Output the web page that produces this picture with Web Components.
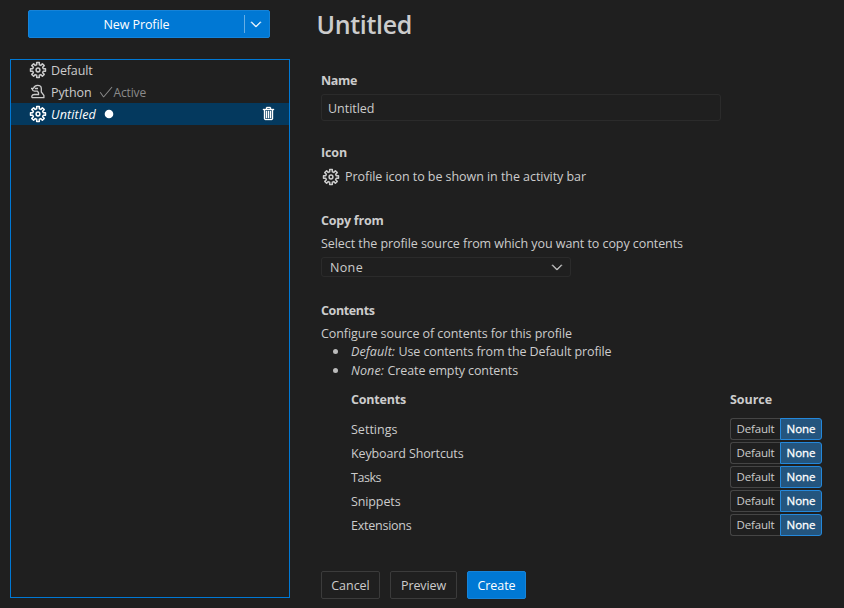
<!DOCTYPE html>
<html lang="en"><head><meta charset="utf-8"><title>Profiles</title>
<style>
html,body{margin:0;height:100%;background:#1f1f1f;overflow:hidden}
body{font:12.5px/18px "Open Sans","Noto Sans",sans-serif;color:#ccc}
</style></head><body><profiles-editor></profiles-editor>
<script>
const define=(name,html,init)=>customElements.define(name,class extends HTMLElement{
  constructor(){super();this.attachShadow({mode:'open'}).innerHTML=html}
  connectedCallback(){init&&init(this,this.shadowRoot)}
});

/* Text run tracked to a given width. */
define('ui-text','<style>:host{display:inline-block;white-space:pre}span{display:inline-block}</style><span><slot></slot></span>',(el,r)=>{
  const w=+el.getAttribute('w'),s=r.querySelector('span');
  if(!w)return;
  const n=el.textContent.length;
  s.style.letterSpacing=(w-s.getBoundingClientRect().width)/n+'px';
});

/* Eight-toothed gear outline. */
const gearPath=(()=>{
  const pts=[];
  for(let i=0;i<8;i++){
    for(const [d,r] of [[-14,5.4],[-10,7.6],[10,7.6],[14,5.4]]){
      const a=(i*45+d)*Math.PI/180;
      pts.push((8+r*Math.sin(a)).toFixed(2)+' '+(8-r*Math.cos(a)).toFixed(2));
    }
  }
  return 'M'+pts.join('L')+'Z';
})();

const icons={
gear:`<g fill="none" stroke="currentColor" stroke-width="1.500" stroke-linejoin="round"><path d="${gearPath}"/><circle cx="8" cy="8" r="1.900"/></g>`,
snake:'<path fill="none" stroke="currentColor" stroke-width="1.300" stroke-linejoin="round" d="M1 4.500H3.500M5 4.500H8M3.500 4.500Q4.200 1.400 7.600 1.400Q11.300 1.400 11.300 4.500V8L13.900 11.300V13.700H3Q1.500 13.700 1.900 12Q2.300 10.500 4.200 10.500H8.600Q9 8.600 7.500 7.200H4.500Q2.500 7 2.200 5"/>',
chevron:'<path d="M7.976 10.072l4.357-4.357.62.618L8.284 11h-.618L3 6.333l.619-.618 4.357 4.357z" stroke="currentColor" stroke-width=".5"/>',
check:'<path d="M14.431 3.323l-8.470 10-.790-.036-3.350-4.770.818-.574 2.978 4.240 8.051-9.506.764.646z"/>',
dot:'<circle cx="8" cy="8" r="4.300"/>',
trash:'<path stroke="currentColor" stroke-width=".35" d="M10 3h3v1h-1v9l-1 1H4l-1-1V4H2V3h3V2a1 1 0 0 1 1-1h3a1 1 0 0 1 1 1v1zM9 2H6v1h3V2zM4 13h7V4H4v9zm2-8H5v7h1V5zm1 0h1v7H7V5zm2 0h1v7H9V5z"/>'};
define('ui-icon','<style>:host{display:block;width:16px;height:16px;flex:none}svg{display:block;width:100%;height:100%;fill:currentColor;overflow:visible}</style><svg viewBox="0 0 16 16"></svg>',(el,r)=>{
  r.querySelector('svg').innerHTML=icons[el.getAttribute('name')];
});

define('split-button',`<style>:host{display:flex;height:28px;box-sizing:border-box;background:#0078d4;border:1px solid #1683d8;border-radius:2px;color:#fff;align-items:center}
.m{flex:1;text-align:center;padding-top:1px}.s{width:1px;height:18px;background:#66aee5}ui-icon{margin:0 5px 0 3px}</style>
<div class="m"><slot></slot></div><div class="s"></div><ui-icon name="chevron"></ui-icon>`);

define('profile-row',`<style>:host{display:flex;align-items:center;height:22px;padding:0 12px 0 19px}
:host([selected]){background:#04395e;color:#fff}
:host([selected]) .l{font-style:italic}.l{margin-left:5px;padding-top:1px;line-height:22px}.e{display:flex;align-items:center;flex:1}</style>
<ui-icon></ui-icon><div class="l"><slot></slot></div><div class="e"><slot name="extra"></slot></div><slot name="action"></slot>`,(el,r)=>{
  const i=r.querySelector('ui-icon');i.setAttribute('name',el.getAttribute('icon'));i.connectedCallback();
});

define('ui-button',`<style>:host{display:flex;box-sizing:border-box;height:28px;padding-top:2px;border:1px solid #3b3b3b;border-radius:2px;align-items:center;justify-content:center}
:host([primary]){background:#0078d4;border-color:#1683d8;color:#fff}</style><slot></slot>`);

define('source-toggle',`<style>:host{display:flex;height:22px;font-size:11.5px;line-height:20px}
div{box-sizing:border-box;border:1px solid #454545;text-align:center}
.a{width:50px;border-right:0;border-radius:3px 0 0 3px}.b{width:42px;border-color:#2488db;background:#24557e;color:#fff;border-radius:0 3px 3px 0;-webkit-text-stroke:.3px}</style>
<div class="a"><ui-text w="38">Default</ui-text></div><div class="b"><ui-text w="29">None</ui-text></div>`);

define('content-row',`<style>:host{display:flex;height:24px;align-items:center;justify-content:space-between}div{padding-top:2px}</style><div><slot></slot></div><source-toggle></source-toggle>`);

define('profiles-editor',`<style>
:host{display:flex;height:608px}
aside{width:280px;padding:10px 0 0 10px}
split-button{margin:0 20px 21px 18px}
.list{height:537px;border:1px solid #0078d4;width:278px}
.list profile-row:first-child{height:20px;padding-bottom:1px}
.active{color:#8b8b8b;font-size:12px;padding-top:1px}
main{flex:1;padding:0 22px 0 31px}
h1{margin:0 0 0 -4.500px;padding-top:6px;font:600 25px/36px "Open Sans",sans-serif;height:37px}
h2{margin:0;font:700 12.500px/18px "Open Sans",sans-serif}
p{margin:0;height:18px}
.input{box-sizing:border-box;width:400px;height:27px;border:1px solid #2b2b2b;border-radius:3px;padding-left:6px;line-height:27px;margin-top:4px}
.icon{display:flex;align-items:center;gap:6px;margin:6px 0 0 2px}
.select{box-sizing:border-box;width:250px;height:20px;border:1px solid #2b2b2b;border-radius:3px;padding:0 5px 0 8px;display:flex;align-items:center;justify-content:space-between;margin-top:4px}
.select ui-text{padding-top:1px}
ul{margin:0;padding:0 0 0 30px;line-height:19px;list-style:none}
li{display:flex;align-items:center}
li::before{content:"";width:5px;height:5px;border-radius:50%;background:#bbb;margin:0 13px 0 -18px}
.table{margin:10px 0 0 30px}
.head{display:flex;justify-content:space-between;height:26px;font-weight:700}
.head ui-text:last-child{margin-right:50px}
.actions{display:flex;gap:10px;margin-top:34px}
</style>
<aside><split-button><ui-text w="66">New Profile</ui-text></split-button>
<div class="list">
<profile-row icon="gear"><ui-text w="41.500">Default</ui-text></profile-row>
<profile-row icon="snake"><ui-text w="40.500">Python</ui-text><ui-icon slot="extra" name="check" class="active" style="margin-left:6px;padding:0"></ui-icon><ui-text slot="extra" class="active" w="32.500">Active</ui-text></profile-row>
<profile-row icon="gear" selected><ui-text w="45">Untitled</ui-text><ui-icon slot="extra" name="dot" style="margin-left:5px"></ui-icon><ui-icon slot="action" name="trash"></ui-icon></profile-row>
</div></aside>
<main>
<h1><ui-text w="95.500">Untitled</ui-text></h1>
<h2 style="margin-top:29px"><ui-text w="36">Name</ui-text></h2>
<div class="input"><ui-text w="46.500">Untitled</ui-text></div>
<h2 style="margin-top:23px"><ui-text w="26">Icon</ui-text></h2>
<div class="icon"><ui-icon name="gear"></ui-icon><ui-text w="241">Profile icon to be shown in the activity bar</ui-text></div>
<h2 style="margin-top:26px"><ui-text w="62.500">Copy from</ui-text></h2>
<p style="margin-top:5px"><ui-text w="362">Select the profile source from which you want to copy contents</ui-text></p>
<div class="select"><ui-text w="33">None</ui-text><ui-icon name="chevron"></ui-icon></div>
<h2 style="margin-top:25px"><ui-text w="53.500">Contents</ui-text></h2>
<p style="margin-top:5px"><ui-text w="251">Configure source of contents for this profile</ui-text></p>
<ul style="margin-top:-1px"><li><ui-text w="47.500" style="font-style:italic">Default: </ui-text><ui-text w="213">Use contents from the Default profile</ui-text></li>
<li><ui-text w="36.500" style="font-style:italic">None: </ui-text><ui-text w="130.500">Create empty contents</ui-text></li></ul>
<div class="table" style="padding-top:1px"><div class="head"><ui-text w="55">Contents</ui-text><ui-text w="42">Source</ui-text></div>
<content-row><ui-text w="46.500">Settings</ui-text></content-row>
<content-row><ui-text w="112.500">Keyboard Shortcuts</ui-text></content-row>
<content-row><ui-text w="30">Tasks</ui-text></content-row>
<content-row><ui-text w="49.500">Snippets</ui-text></content-row>
<content-row><ui-text w="60.500">Extensions</ui-text></content-row></div>
<div class="actions"><ui-button style="width:59px"><ui-text w="38.500">Cancel</ui-text></ui-button><ui-button style="width:67px"><ui-text w="45">Preview</ui-text></ui-button><ui-button primary style="width:59px"><ui-text w="38">Create</ui-text></ui-button></div>
</main>`);
</script></body></html>
